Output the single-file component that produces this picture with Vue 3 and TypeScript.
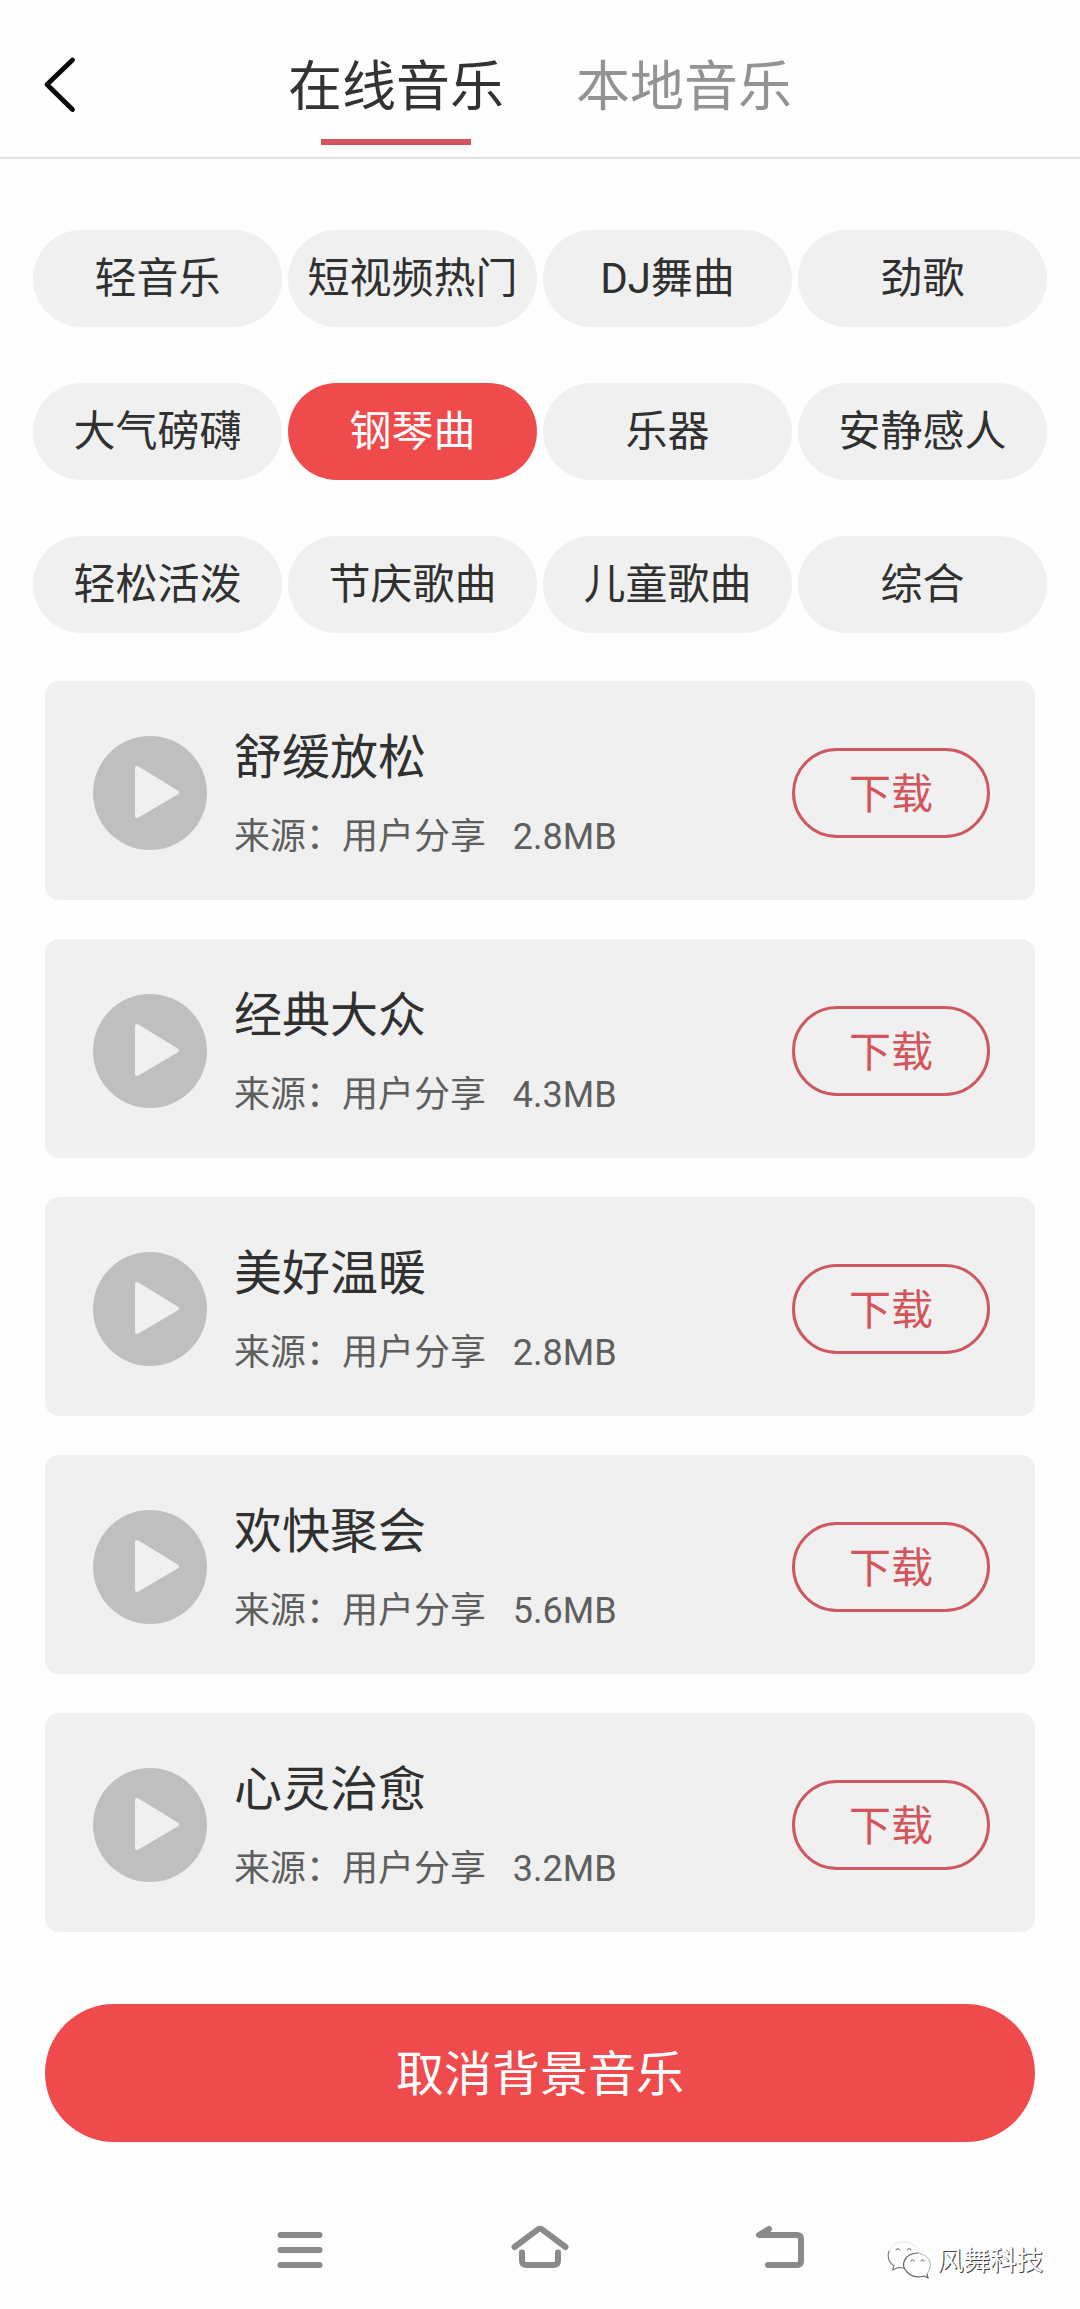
<script setup lang="ts">
import { ref } from 'vue'

interface Track {
  title: string
  size: string
}

const tabs: string[] = ['在线音乐', '本地音乐']
const activeTab = ref(0)

const categories: string[] = [
  '轻音乐', '短视频热门', 'DJ舞曲', '劲歌',
  '大气磅礴', '钢琴曲', '乐器', '安静感人',
  '轻松活泼', '节庆歌曲', '儿童歌曲', '综合',
]
const activeCategory = ref('钢琴曲')

const tracks: Track[] = [
  { title: '舒缓放松', size: '2.8MB' },
  { title: '经典大众', size: '4.3MB' },
  { title: '美好温暖', size: '2.8MB' },
  { title: '欢快聚会', size: '5.6MB' },
  { title: '心灵治愈', size: '3.2MB' },
]
</script>

<template>
  <div class="screen">
    <header class="header">
      <svg class="back" width="36" height="60" viewBox="0 0 36 60" fill="none" stroke="#0a0a0a" stroke-width="4.8" stroke-linecap="round" stroke-linejoin="round">
        <path d="M30.500 5 L5 29.500 L30.500 54.500" />
      </svg>
      <nav class="tabs">
        <button
          v-for="(tab, i) in tabs"
          :key="tab"
          class="tab"
          :class="{ active: i === activeTab }"
          @click="activeTab = i"
        >
          <span>{{ tab }}</span>
          <i class="bar"></i>
        </button>
      </nav>
    </header>

    <section class="categories">
      <button
        v-for="c in categories"
        :key="c"
        class="chip"
        :class="{ active: c === activeCategory }"
        @click="activeCategory = c"
      >{{ c }}</button>
    </section>

    <ul class="tracks">
      <li v-for="t in tracks" :key="t.title" class="track">
        <svg class="play" width="114" height="114" viewBox="0 0 114 114">
          <circle cx="57" cy="57" r="57" fill="#bfbfbf" />
          <path d="M44 32 L84 56.500 L44 80 Z" fill="#f0f0f0" stroke="#f0f0f0" stroke-width="4" stroke-linejoin="round" />
        </svg>
        <div class="info">
          <div class="title">{{ t.title }}</div>
          <div class="meta">{{ '来源：用户分享   ' + t.size }}</div>
        </div>
        <button class="download">下载</button>
      </li>
    </ul>

    <button class="cancel">取消背景音乐</button>

    <footer class="sysnav">
      <svg width="46" height="46" viewBox="0 0 46 46" class="key">
        <path d="M3.500 8 H42.500 M3.500 23 H42.500 M3.500 38 H42.500" />
      </svg>
      <svg width="58" height="46" viewBox="0 0 58 46" class="key home">
        <path d="M3.500 20 L27 2.400 Q29 1 31 2.400 L54.500 20" />
        <path d="M11 25.500 V33.500 Q11 38 15.500 38 H42.500 Q47 38 47 33.500 V25.500" />
      </svg>
      <svg width="50" height="46" viewBox="0 0 50 46" class="key return">
        <path d="M14 2 L4 8 H42 Q46 8 46 12 V34 Q46 38 42 38 H13" />
      </svg>
      <div class="brand">
        <svg width="46" height="40" viewBox="0 0 46 40" fill="none" stroke-linecap="round">
          <path d="M3 9 Q7 1 16 1 Q27 1 31 10" stroke="#cfcfcf" stroke-width=".8" stroke-dasharray="2 1.500" />
          <path d="M2 10 Q-1 19 7 25 L5.500 29 L11 26.500 L17 27" stroke="#777" stroke-width="1.100" />
          <path d="M31 12 C18 12 12.500 24 20 31 Q27 38 37 35 L41 37 L40 33" stroke="#666" stroke-width="1.200" />
          <path d="M32 12 Q43 15 43.500 24 Q43 30 40 33" stroke="#aaa" stroke-width=".9" />
          <path d="M9 9 q1.800-2.500 3.500 0 M20.500 9 q1.800-2.500 3.500 0 M24 20 q1.600-2.500 3.200 0 M34 20 q1.600-2.500 3.200 0" stroke="#777" stroke-width="1.100" />
        </svg>
        <span>风舞科技</span>
      </div>
    </footer>
  </div>
</template>

<style>
body {
  margin: 0;
  background: #fefefe;
}
</style>

<style scoped>
.screen {
  width: 1080px;
  height: 2309px;
  overflow: hidden;
  background: #fefefe;
  color: #303030;
  font-family: Roboto, "Noto Sans CJK SC", sans-serif;
}

button {
  margin: 0;
  padding: 0;
  border: 0;
  background: none;
  color: inherit;
  font: inherit;
}

.header {
  position: relative;
  height: 157px;
  border-bottom: 2px solid #e1e1e1;
  display: flex;
  justify-content: center;
}

.back {
  position: absolute;
  left: 42px;
  top: 55px;
}

.tabs {
  display: flex;
  gap: 72px;
  padding-top: 52px;
}

.tab {
  display: flex;
  flex-direction: column;
  align-items: center;
  justify-content: flex-start;
  font-size: 54px;
  line-height: 72px;
  color: #939393;
}

.tab.active {
  color: #333;
}

.bar {
  width: 150px;
  height: 6px;
  margin-top: 15px;
}

.tab.active .bar {
  background: #d4545d;
}

.categories {
  display: grid;
  grid-template-columns: repeat(4, 249px);
  gap: 56px 6px;
  padding: 71px 0 0 33px;
}

.chip {
  height: 97px;
  border-radius: 49px;
  background: #f0f0f0;
  font-size: 42px;
  line-height: 97px;
  white-space: nowrap;
  text-align: center;
}

.chip.active {
  background: #ef4b4c;
  color: #fff;
}

.tracks {
  list-style: none;
  margin: 48px 45px 0;
  padding: 0;
  display: flex;
  flex-direction: column;
  gap: 39px;
}

.track {
  box-sizing: border-box;
  height: 219px;
  padding: 5px 45px 0 48px;
  border-radius: 14px;
  background: #f0f0f0;
  display: flex;
  align-items: center;
}

.play {
  flex: none;
}

.info {
  flex: 1;
  margin: 8px 0 0 27px;
}

.title {
  font-size: 48px;
  line-height: 80px;
}

.meta {
  font-size: 36px;
  line-height: 78px;
  color: #5e5e5e;
  white-space: pre;
}

.download {
  box-sizing: border-box;
  width: 198px;
  height: 90px;
  padding-top: 2px;
  border: 3px solid #cc5960;
  border-radius: 45px;
  font-size: 42px;
  line-height: 84px;
  color: #d4545b;
}

.cancel {
  display: block;
  width: 990px;
  height: 138px;
  margin: 72px 45px 0;
  padding-top: 2px;
  border-radius: 69px;
  background: #ef4b4c;
  color: #fff;
  font-size: 48px;
  line-height: 138px;
}

.sysnav {
  display: flex;
  align-items: flex-start;
  padding: 85px 0 0 277px;
}

.key {
  flex: none;
  overflow: visible;
  fill: none;
  stroke: #8a8a8a;
  stroke-width: 6px;
  stroke-linecap: round;
  stroke-linejoin: round;
}

.home {
  margin-left: 188px;
}

.return {
  margin-left: 186px;
}

.brand {
  display: flex;
  align-items: center;
  margin: 14px 0 0 82px;
  gap: 4px;
  font-size: 26.5px;
  line-height: 40px;
  color: #fff;
  text-shadow: 1px 1px 0 #444, 1px 0 0 #777;
  white-space: nowrap;
}
</style>
